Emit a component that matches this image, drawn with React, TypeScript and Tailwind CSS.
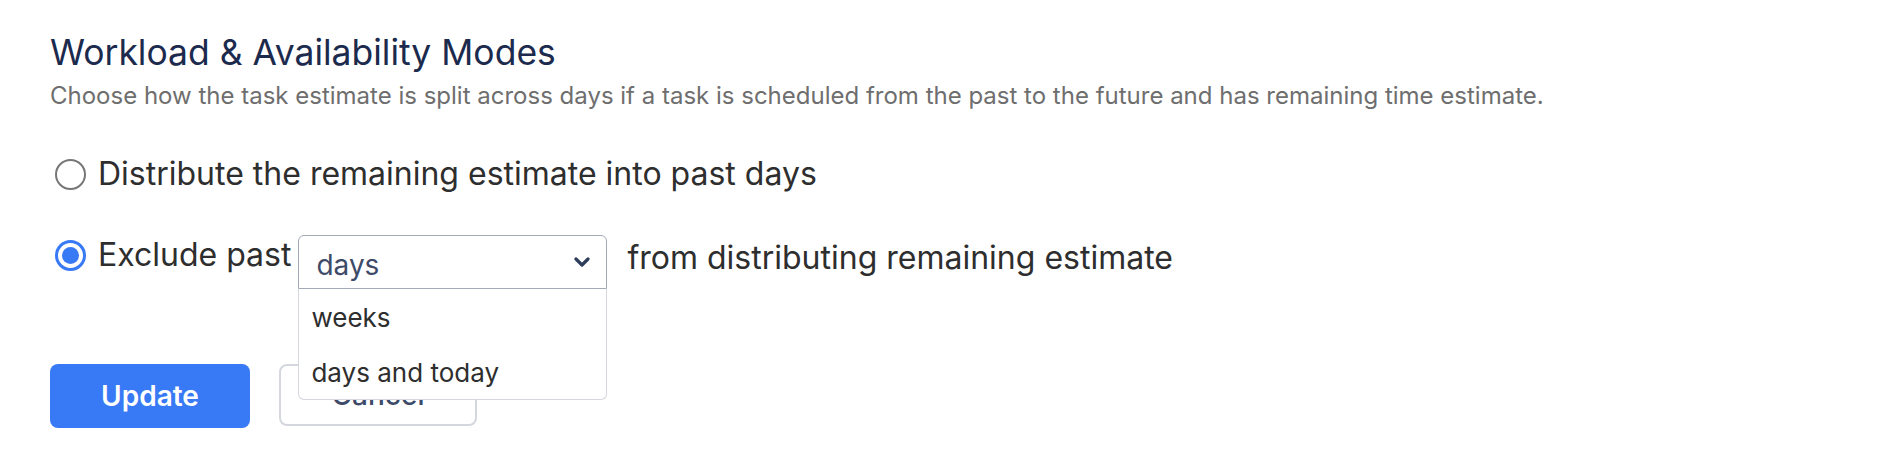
import React from "react";

function Radio({ checked }: { checked: boolean }) {
  return checked ? (
    <span className="ml-[5px] flex h-[31px] w-[31px] shrink-0 items-center justify-center rounded-full border-[3px] border-[#3879f5] bg-white">
      <span className="h-[17px] w-[17px] rounded-full bg-[#3879f5]" />
    </span>
  ) : (
    <span className="ml-[5px] h-[31px] w-[31px] shrink-0 rounded-full border-2 border-[#767676] bg-white" />
  );
}

function Chevron() {
  return (
    <svg width="16" height="10" viewBox="0 0 16 10" fill="none">
      <path d="M2 2l6 6 6-6" stroke="#2f3d5c" strokeWidth="3.2" strokeLinecap="round" strokeLinejoin="round" />
    </svg>
  );
}

export default function App() {
  return (
    <div className="h-[458px] w-[1886px] bg-white pl-[50px] pt-[33px] font-['Inter','Noto_Sans',sans-serif]">
      <h2 className="text-[35.5px] leading-[40px] text-[#1b2a4d]">Workload &amp; Availability Modes</h2>
      <p className="mt-[8px] text-[24px] leading-[30px] text-[#6e6e6e]">
        Choose how the task estimate is split across days if a task is scheduled from the past to the future and has remaining time estimate.
      </p>

      <div className="mt-[43px] flex h-[40px] items-center gap-[12px] text-[32px] text-[#2e2e2e]">
        <Radio checked={false} />
        <span>Distribute the remaining estimate into past days</span>
      </div>

      <div className="mt-[41px] flex items-start text-[32px] text-[#2e2e2e]">
        <div className="flex h-[40px] items-center gap-[12px]">
          <Radio checked={true} />
          <span>Exclude past</span>
        </div>
        <div className="relative ml-[7px] w-[309px]">
          <div className="flex h-[54px] items-center justify-between rounded-t-[6px] border-[1.5px] border-[#a3a9b6] pl-[17px] pr-[16px] text-[28px] text-[#3d4b69]">
            <span className="pt-[6px]">days</span>
            <Chevron />
          </div>
          <div className="absolute left-0 top-full z-10 w-full rounded-b-[6px] border-[1.5px] border-t-0 border-[#d4d7dd] bg-white text-[26px] text-[#2e2e2e]">
            <div className="flex h-[56px] items-center pl-[12px]">weeks</div>
            <div className="flex h-[54px] items-center pl-[12px]">days and today</div>
          </div>
        </div>
        <span className="ml-[20px] flex h-[46px] items-center">from distributing remaining estimate</span>
      </div>

      <div className="mt-[75px] flex items-start gap-[29px]">
        <button className="h-[64px] w-[200px] rounded-[8px] bg-[#3879f5] text-[28px] font-semibold text-white">Update</button>
        <button className="h-[62px] w-[198px] rounded-[8px] border-2 border-[#d4d7dd] bg-white text-[28px] font-medium text-[#3d4b69]">Cancel</button>
      </div>
    </div>
  );
}
